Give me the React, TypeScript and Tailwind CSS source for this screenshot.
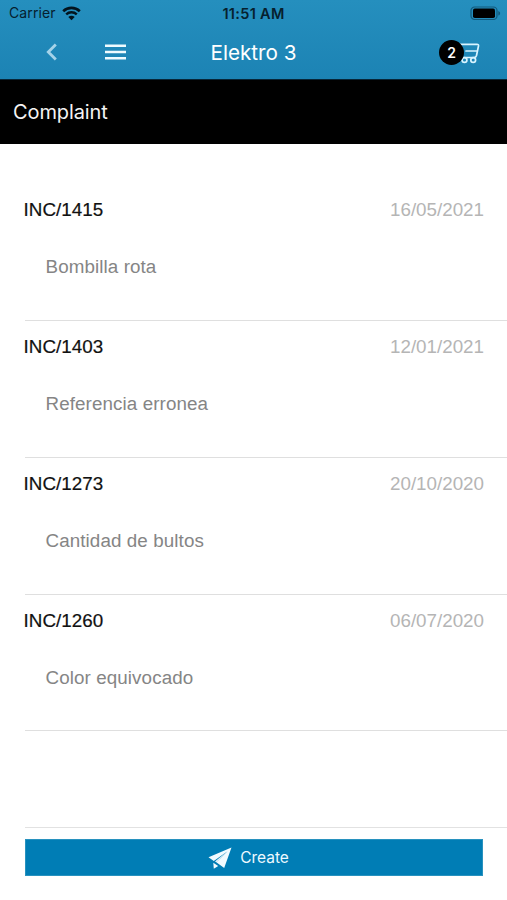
const complaints = [
  { id: "INC/1415", date: "16/05/2021", text: "Bombilla rota" },
  { id: "INC/1403", date: "12/01/2021", text: "Referencia erronea" },
  { id: "INC/1273", date: "20/10/2020", text: "Cantidad de bultos" },
  { id: "INC/1260", date: "06/07/2020", text: "Color equivocado" },
];

function StatusBar() {
  return (
    <div className="grid h-[27px] grid-cols-3 items-center text-[#06202e]">
      <div className="flex items-center gap-[6px] pb-px pl-[9px]">
        <span className="text-[14px] leading-[26px] tracking-[0.1px]">Carrier</span>
        <svg width="19" height="15" viewBox="0 0 19 15" fill="none" stroke="#03141d">
          <path d="M1.2 5.2C5.8 .7 13.2 .7 17.8 5.2" strokeWidth="2.6" />
          <path d="M4.2 8.4C7.2 5.6 11.8 5.6 14.8 8.4" strokeWidth="2.4" />
          <path d="M9.5 14.2 6.3 11C8.1 9.4 10.9 9.4 12.7 11Z" fill="#03141d" stroke="none" />
        </svg>
      </div>
      <div className="text-center text-[14.5px] leading-[26px] font-semibold tracking-[0.3px]">11:51 AM</div>
      <div className="flex justify-end pr-[6px] pb-px">
        <svg width="31" height="15" viewBox="0 0 31 15">
          <rect x="1" y="1" width="26" height="12.5" rx="3.6" fill="none" stroke="#125a7c" strokeWidth="1.2" />
          <rect x="3" y="2.6" width="22" height="9.4" rx="1.8" fill="#000" />
          <path d="M28.3 5v4.6c1.1-.4 1.8-1.3 1.8-2.3S29.4 5.4 28.3 5Z" fill="#125a7c" />
        </svg>
      </div>
    </div>
  );
}

function NavBar() {
  return (
    <div className="grid h-[52px] grid-cols-3 items-center text-white">
      <div className="flex items-center gap-[48px] pb-[2px] pl-[46px]">
        <svg width="11" height="18" viewBox="0 0 11 18" fill="none" stroke="#a5d3e9" strokeWidth="2.8">
          <path d="M9.8 1.5 2.3 9l7.5 7.5" />
        </svg>
        <svg width="21" height="16" viewBox="0 0 21 16" fill="#effbff">
          <path d="M0 .6h21v2.5H0ZM0 6.8h21v2.5H0ZM0 13h21v2.5H0Z" />
        </svg>
      </div>
      <h1 className="text-center text-[20.7px] leading-[52px]">Elektro 3</h1>
      <div className="flex items-center justify-end pr-[27px] pb-px">
        <span className="z-10 flex size-[25px] items-center justify-center rounded-full bg-black text-[14px] font-semibold">2</span>
        <svg className="-ml-[12px] mt-px" width="28" height="22" viewBox="0 0 28 22" fill="none" stroke="#d9f4ff" strokeWidth="1.7" strokeLinejoin="round" strokeLinecap="round">
          <path d="M1 1h4l3.5 14.500h13.500q2 0 2.500-2L26.500 4q.3-1.700-1.500-1.700H6" />
          <path d="M14 9h10.500" />
          <circle cx="12.500" cy="18" r="2.400" />
          <circle cx="21.200" cy="18" r="2.400" />
        </svg>
      </div>
    </div>
  );
}

export default function App() {
  return (
    <div className="flex h-[900px] w-[507px] flex-col overflow-hidden bg-white font-['Inter',sans-serif]">
      <header className="h-[79px] shrink-0 bg-linear-to-b from-[#258fbe] to-[#1c83b4]">
        <StatusBar />
        <NavBar />
      </header>
      <div className="flex h-[65px] shrink-0 items-center border-t border-[#072638] bg-black pl-[13px] text-[20px] tracking-[-0.1px] text-[#f4f4f4]">
        Complaint
      </div>
      <main className="flex h-[683px] shrink-0 flex-col pt-[40px] font-['Liberation_Sans',Arial,sans-serif] text-[18.8px] leading-[24px]">
        {complaints.map((item) => (
          <article key={item.id} className="h-[137px] shrink-0 pl-[25px] last:h-[136px]">
            <div className="h-full border-b border-[#dfdfdf] pt-[14px]">
              <div className="-ml-[1.5px] flex justify-between pr-[23px]">
                <h2 className="tracking-[0.05px] text-[#111] [-webkit-text-stroke:0.2px_#111]">{item.id}</h2>
                <time className="text-[#b5b5b5]">{item.date}</time>
              </div>
              <p className="mt-[33px] pl-[20.5px] tracking-[0.1px] text-[#858585]">{item.text}</p>
            </div>
          </article>
        ))}
      </main>
      <footer className="ml-[25px] border-t border-[#e2e2e2] pt-[11px]">
        <button className="flex h-[37px] w-[458px] items-center justify-center gap-[8px] border border-[#2892bf] bg-[#007db5] pr-[11px] text-[15.5px] text-[#edf9ff]">
          <svg width="24" height="22" viewBox="0 0 24 22" fill="#f2fbff">
            <path d="M23.5.5.5 10.3l5.3 3.7L19.500 4.300 8.300 15.300l7.900 5.700Z" />
            <path d="m5.300 15.700 4.900 3.300-4.400 2.800Z" />
            <path d="M19.500 4.300 7 14.500l1.300.8Z" />
          </svg>
          <span className="pt-px">Create</span>
        </button>
      </footer>
    </div>
  );
}
